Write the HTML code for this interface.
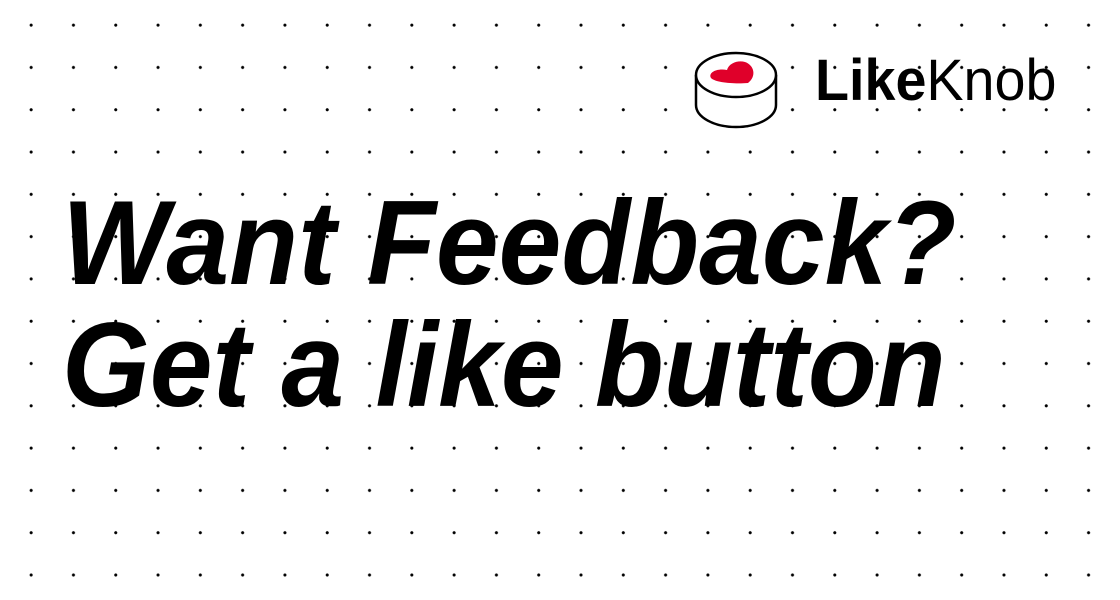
<!DOCTYPE html>
<html><head><meta charset="utf-8"><style>
html,body{margin:0;padding:0}
body{width:1120px;height:600px;overflow:hidden;position:relative;background:#fff;
background-image:radial-gradient(circle,#000 1.3px,transparent 1.8px);
background-size:42.3px 42.3px;background-position:10px 4px;font-family:"Liberation Sans",sans-serif}
.h{position:absolute;left:62px;font-weight:bold;font-style:italic;font-size:120px;line-height:1;color:#000;transform:scaleX(0.94);transform-origin:left top;letter-spacing:0;white-space:nowrap}
.logo{position:absolute;left:815px;top:52px;font-size:58px;line-height:1;color:#000;white-space:nowrap;transform:scaleX(0.96);transform-origin:left top}
</style></head><body>
<svg style="position:absolute;left:690px;top:45px" width="95" height="90" viewBox="690 45 95 90">
<path d="M696 75 V105 A40 22 0 0 0 776 105 V75" fill="#fff" stroke="#000" stroke-width="2.5"/>
<ellipse cx="736" cy="75" rx="40" ry="22" fill="#fff" stroke="#000" stroke-width="2.5"/>
<path d="M748 83 C735 84 716 83 711 78 C708 73 716 68 727 70 C729 63 738 60 745 62 C754 65 757 76 748 83 Z" fill="#e0002a"/>
</svg>
<div class="logo"><b>Like</b>Knob</div>
<div class="h" style="top:183px">Want Feedback?</div>
<div class="h" style="top:305px">Get a like button</div>
</body></html>
